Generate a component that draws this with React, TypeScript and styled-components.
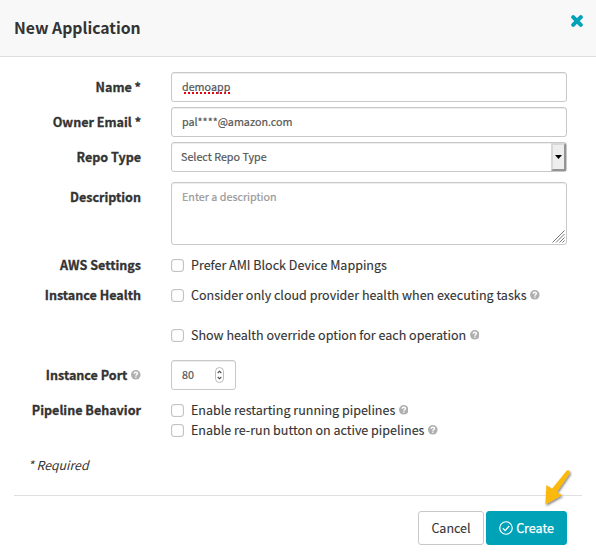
import React from "react";
import styled, { createGlobalStyle } from "styled-components";

const TEAL = "#00a2b8";

const GlobalStyle = createGlobalStyle`
  * { box-sizing: border-box; }
  html, body { margin: 0; background: #fff; }
  body, button, input, textarea {
    font-family: "Noto Sans CJK SC", "Open Sans", sans-serif;
    color: #333;
  }
`;

const Modal = styled.div`
  position: relative;
  width: 596px;
  height: 560px;
  overflow: hidden;
  background: #fff;
`;

const Header = styled.header`
  display: flex;
  align-items: center;
  height: 57px;
  padding: 0 14px;
  background: #f8f8f8;
  border-bottom: 1px solid #dedede;
`;

const Title = styled.h1`
  margin: 0;
  font-size: 15.75px;
  line-height: 24px;
  font-weight: 700;
  white-space: nowrap;
`;

const CloseButton = styled.button`
  position: absolute;
  top: 15px;
  right: 13px;
  display: flex;
  padding: 0;
  border: 0;
  background: none;
`;

const Form = styled.form`
  display: flex;
  flex-direction: column;
  padding-top: 15px;
`;

const Row = styled.div<{ $height: number; $gap?: number }>`
  display: grid;
  grid-template-columns: 141px 396px;
  column-gap: 30px;
  height: ${(p) => p.$height}px;
  margin-bottom: ${(p) => p.$gap ?? 5}px;
`;

const Label = styled.label<{ $line?: number }>`
  display: flex;
  align-items: center;
  justify-content: flex-end;
  gap: 4px;
  height: ${(p) => p.$line ?? 30}px;
  font-size: 12.55px;
  font-weight: 700;
  line-height: 20px;
  white-space: nowrap;
  -webkit-text-stroke: 0.3px #333;
`;

const Control = styled.div`
  display: flex;
  align-items: center;
  height: 30px;
  padding: 0 10px 1px;
  border: 1px solid #c8c8c8;
  border-radius: 3px;
  box-shadow: inset 0 1px 1px rgba(0, 0, 0, 0.075);
  font-size: 10.75px;
  line-height: 16px;
  color: #555;
  white-space: nowrap;
  -webkit-text-stroke: 0.2px;
`;

const Misspelled = styled.span`
  line-height: 16px;
  height: 16px;
  background: repeating-linear-gradient(90deg, transparent 0 2px, #e8000c 2px 4px) 0 13px / 100% 2px no-repeat;
`;

const SelectControl = styled(Control)`
  justify-content: space-between;
  padding: 0 0 0 9px;
`;

const SelectValue = styled.span`
  padding-bottom: 1px;
`;

const DropButton = styled.span`
  display: flex;
  align-items: center;
  justify-content: center;
  width: 15px;
  height: 28px;
  background: #eee;
  border: 2px solid #d8d8d8;
  border-right-color: #949494;
  border-bottom-color: #949494;
`;

const TextArea = styled(Control)`
  position: relative;
  align-items: flex-start;
  height: 63px;
  padding-top: 6px;
  color: #999;
`;

const ResizeGrip = styled.svg`
  position: absolute;
  right: 1px;
  bottom: 1px;
`;

const NumberControl = styled(Control)`
  width: 65px;
  justify-content: space-between;
`;

const Stepper = styled.span`
  display: flex;
  align-items: center;
  justify-content: center;
  width: 9px;
  height: 16px;
  margin-right: 1px;
  border: 1px solid #bbb;
  border-radius: 5px;
`;

const CheckLine = styled.label<{ $after?: number }>`
  display: flex;
  align-items: center;
  height: 20px;
  margin-bottom: ${(p) => p.$after ?? 0}px;
  font-size: 12.52px;
  line-height: 20px;
  white-space: nowrap;
  -webkit-text-stroke: 0.12px #333;
`;

const Box = styled.span`
  width: 13px;
  height: 13px;
  margin-right: 7px;
  border: 1px solid #c3c3c3;
  border-radius: 3px;
  box-shadow: inset 0 0 1px #bbb;
`;

const HelpSvg = styled.svg<{ $offset?: number }>`
  flex: none;
  margin-left: ${(p) => p.$offset ?? 0}px;
`;

const Required = styled.p`
  margin: 0 0 0 28px;
  font-size: 12.3px;
  line-height: 20px;
  font-style: italic;
`;

const Footer = styled.footer`
  display: flex;
  justify-content: flex-end;
  gap: 2px;
  margin: 20px 14px 0;
  padding: 15px 15px 0 0;
  border-top: 1px solid #e0e0e0;
`;

const Button = styled.button<{ $primary?: boolean }>`
  display: flex;
  align-items: center;
  justify-content: center;
  gap: 3px;
  width: ${(p) => (p.$primary ? 81 : 66)}px;
  height: 34px;
  padding: 0;
  border: 1px solid ${(p) => (p.$primary ? TEAL : "#c8c8c8")};
  border-radius: 3px;
  background: ${(p) => (p.$primary ? TEAL : "#fff")};
  color: ${(p) => (p.$primary ? "#fff" : "#333")};
  font-size: 12.5px;
  font-weight: 400;
  line-height: 20px;
  white-space: nowrap;
  -webkit-text-stroke: ${(p) => (p.$primary ? 0.25 : 0.1)}px;
`;

const Pointer = styled.svg`
  position: absolute;
  left: 538px;
  top: 466px;
  pointer-events: none;
`;

const Help = ({ offset }: { offset?: number }) => (
  <HelpSvg $offset={offset} width="9.6" height="9.6" viewBox="0 0 9 9">
    <circle cx="4.5" cy="4.5" r="4.5" fill="#b0b0b0" />
    <path d="M2.9 3.6C3 1.6 6.1 1.7 6.1 3.4c0 1-1.5 1-1.5 2" fill="none" stroke="#fff" strokeWidth="1.3" />
    <rect x="3.9" y="6.1" width="1.3" height="1.2" fill="#fff" />
  </HelpSvg>
);

export default function App() {
  return (
    <>
      <GlobalStyle />
      <Modal>
        <Header>
          <Title>New Application</Title>
          <CloseButton aria-label="Close">
            <svg width="12" height="12" viewBox="0 0 12 12">
              <path
                d="M2.2 2.2l7.6 7.6M9.8 2.2l-7.6 7.6"
                stroke={TEAL}
                strokeWidth="4"
                strokeLinecap="round"
              />
            </svg>
          </CloseButton>
        </Header>
        <Form>
          <Row $height={30}>
            <Label>Name *</Label>
            <Control><Misspelled>demoapp</Misspelled></Control>
          </Row>
          <Row $height={30}>
            <Label>Owner Email *</Label>
            <Control>pal****@amazon.com</Control>
          </Row>
          <Row $height={30} $gap={10}>
            <Label>Repo Type</Label>
            <SelectControl>
              <SelectValue>Select Repo Type</SelectValue>
              <DropButton>
                <svg width="7" height="4" viewBox="0 0 7 4"><path d="M0 0h7L3.5 4z" fill="#000" /></svg>
              </DropButton>
            </SelectControl>
          </Row>
          <Row $height={63} $gap={10}>
            <Label>Description</Label>
            <TextArea>
              Enter a description
              <ResizeGrip width="13" height="13" viewBox="0 0 13 13">
                <path d="M.5 12.5l12-12M4 12.5l8.5-8.5M7.5 12.5l5-5M10.5 12.5l2-2" stroke="#777" fill="none" />
              </ResizeGrip>
            </TextArea>
          </Row>
          <Row $height={20} $gap={10}>
            <Label $line={20}>AWS Settings</Label>
            <CheckLine><Box />Prefer AMI Block Device Mappings</CheckLine>
          </Row>
          <Row $height={60} $gap={15}>
            <Label $line={20}>Instance Health</Label>
            <div>
              <CheckLine $after={20}><Box />Consider only cloud provider health when executing tasks<Help offset={3.5} /></CheckLine>
              <CheckLine><Box />Show health override option for each operation<Help offset={3.5} /></CheckLine>
            </div>
          </Row>
          <Row $height={30} $gap={10}>
            <Label>Instance Port<Help /></Label>
            <NumberControl>
              80
              <Stepper>
                <svg width="5" height="10" viewBox="0 0 5 10">
                  <path d="M.7 3l1.8-1.8L4.3 3M.7 7l1.8 1.8L4.3 7" fill="none" stroke="#444" strokeWidth="1.1" />
                </svg>
              </Stepper>
            </NumberControl>
          </Row>
          <Row $height={40} $gap={15}>
            <Label $line={20}>Pipeline Behavior</Label>
            <div>
              <CheckLine><Box />Enable restarting running pipelines<Help offset={3.5} /></CheckLine>
              <CheckLine><Box />Enable re-run button on active pipelines<Help offset={3.5} /></CheckLine>
            </div>
          </Row>
          <Required>* Required</Required>
        </Form>
        <Footer>
          <Button>Cancel</Button>
          <Button $primary>
            <svg width="14" height="14" viewBox="0 0 13 13" fill="none" stroke="#fff">
              <circle cx="6.5" cy="6.5" r="5.8" strokeWidth="1.1" />
              <path d="M3.6 6.8l2.1 2.1 3.8-4.3" strokeWidth="1.2" />
            </svg>
            Create
          </Button>
        </Footer>
        <Pointer width="40" height="44" viewBox="0 0 40 44">
          <defs>
            <filter id="shade" x="-20%" y="-20%" width="150%" height="150%">
              <feDropShadow dx="1" dy="1.5" stdDeviation="0.9" floodColor="#000" floodOpacity="0.5" />
            </filter>
          </defs>
          <path d="M28.2 5.2Q29.2 3.8 31 4.4Q32.4 5.6 31.8 7.2L18.8 26.2L24.2 29L7.4 38.6L8.4 19L14 22.8Z" fill="#fbb90c" filter="url(#shade)" />
        </Pointer>
      </Modal>
    </>
  );
}
